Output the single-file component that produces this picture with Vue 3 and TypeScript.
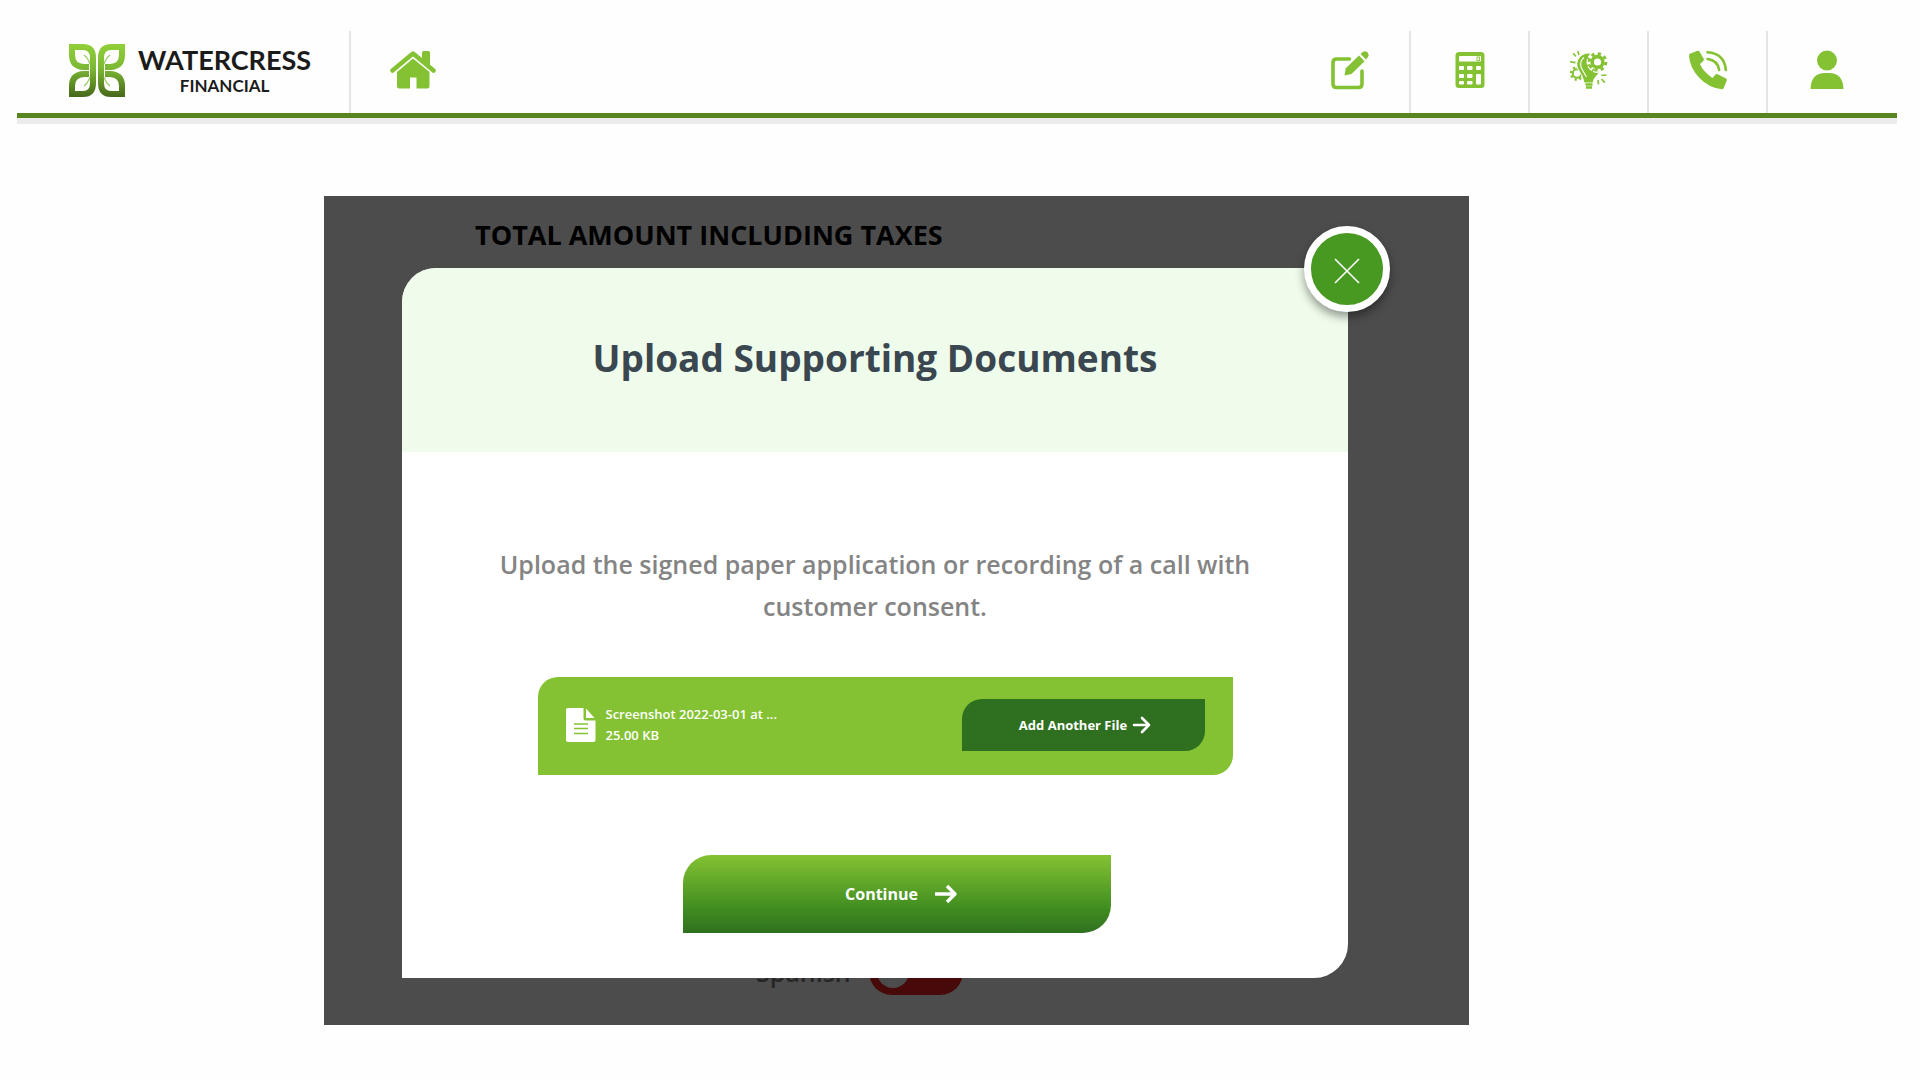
<script setup lang="ts">
import { ref } from 'vue'

interface UploadedFile {
  name: string
  size: string
}

const files = ref<UploadedFile[]>([{ name: 'Screenshot 2022-03-01 at ...', size: '25.00 KB' }])
const spanish = ref(false)
</script>

<template>
  <div class="page">
    <header class="topbar">
      <a class="brand" href="#" aria-label="Watercress Financial">
        <svg class="brand-mark" viewBox="0 0 56 53" fill="none" aria-hidden="true">
          <defs>
            <linearGradient id="leaf" gradientUnits="userSpaceOnUse" x1="0" y1="0" x2="0" y2="53">
              <stop offset="0" stop-color="#91d038" />
              <stop offset="0.45" stop-color="#7cb935" />
              <stop offset="1" stop-color="#47681a" />
            </linearGradient>
          </defs>
          <g stroke="url(#leaf)" stroke-width="6">
            <path d="M20 23H15Q3 22.500 3 11V3H14Q24 3 24 14V39Q24 50 14 50H3V42Q3 30.500 15 30H20" />
            <path d="M36 23H41Q53 22.500 53 11V3H42Q32 3 32 14V39Q32 50 42 50H53V42Q53 30.500 41 30H36" />
          </g>
          <g stroke="#9ccb66" stroke-width="1.200">
            <path d="M15 11Q19 14 21 20M15 42Q19 39 21 33M41 11Q37 14 35 20M41 42Q37 39 35 33" />
          </g>
        </svg>
        <span class="brand-text">
          <span class="brand-name">WATERCRESS</span>
          <span class="brand-sub">FINANCIAL</span>
        </span>
      </a>

      <nav class="nav" aria-label="Main">
        <a class="nav-home" href="#" aria-label="Home">
          <svg class="home-icon" viewBox="0 0 46 40" aria-hidden="true">
            <path d="M32 9V2.500Q32 1 33.500 1H38.500Q40 1 40 2.500V16Z" fill="currentColor" />
            <path d="M2.500 20.500L23 3.500L43.500 20.500" fill="none" stroke="currentColor" stroke-width="4.500" stroke-linejoin="round" stroke-linecap="round" />
            <path d="M7 22L23 8.500L39.500 22V36Q39.500 38.500 37 38.500H26.500V27.500H20V38.500H9.500Q7 38.500 7 36Z" fill="currentColor" />
          </svg>
        </a>
        <div class="nav-tools">
          <a class="tool" href="#" aria-label="Apply">
            <svg viewBox="0 0 40 40" aria-hidden="true">
              <path d="M19.500 9H6.500Q3 9 3 12.500V34Q3 37.500 6.500 37.500H28.500Q32 37.500 32 34V21" fill="none" stroke="currentColor" stroke-width="3.600" stroke-linecap="round" />
              <path d="M14.500 25.500L15.800 18.200L29 5.500L34.500 11.200L21.500 24Z" fill="currentColor" />
              <path d="M30.500 4L33 1.800Q35.500 .3 37.500 2.200Q39.500 4.500 38 7L36 9.500Z" fill="currentColor" />
            </svg>
          </a>
          <a class="tool" href="#" aria-label="Calculator">
            <svg viewBox="0 0 40 40" aria-hidden="true">
              <rect x="5.500" y="2" width="29" height="36" rx="3.500" fill="currentColor" />
              <g fill="#fff">
                <rect x="9" y="6" width="22" height="5.500" rx=".8" />
                <rect x="9" y="16" width="5" height="4" rx="1" />
                <rect x="17" y="16" width="5.500" height="4" rx="1" />
                <rect x="26" y="16" width="5" height="4" rx="1" />
                <rect x="9" y="24" width="5" height="4" rx="1" />
                <rect x="17" y="24" width="5.500" height="4" rx="1" />
                <rect x="9" y="31" width="5" height="3.500" rx="1" />
                <rect x="17" y="31" width="5.500" height="3.500" rx="1" />
                <rect x="26" y="24" width="5" height="10.500" rx="1" />
              </g>
              <rect x="27" y="7" width="2.500" height="3.500" fill="none" stroke="currentColor" stroke-width=".9" />
            </svg>
          </a>
          <a class="tool" href="#" aria-label="Ideas">
            <svg viewBox="0 0 40 40" fill="none" stroke="currentColor" aria-hidden="true">
              <circle cx="8" cy="23.500" r="4.200" stroke-width="2" />
              <circle cx="8" cy="23.500" r="6" stroke-width="2.400" stroke-dasharray="2.200 2.512" />
              <path d="M23 3.500Q16 1.500 10.500 7Q5.500 13 9.500 20Q14 26 15 33H24Q24.500 28 28.500 25Q31 22.500 30 20L20 12Z" fill="currentColor" stroke="#fff" stroke-width="1" />
              <path d="M15 7.500Q10.500 11 12 17Q14 21.500 17.500 27" stroke="#fff" stroke-width="1.100" />
              <circle cx="28.500" cy="12" r="7.800" fill="#fff" stroke="none" />
              <circle cx="28.500" cy="12" r="9.200" stroke="#fff" stroke-width="3.400" stroke-dasharray="5.200 1.367" />
              <circle cx="28.500" cy="12" r="5.400" stroke-width="3.600" />
              <circle cx="28.500" cy="12" r="8.300" stroke-width="3" stroke-dasharray="3.200 3.319" />
              <path d="M16.500 34.500H23.500M17 37.500H23" stroke-width="2.400" />
              <path d="M8.800 1L10 5M4.100 3.300L7 6.500M1 11.700L6.500 12.600M32.500 25.200H37.500M32.500 29L35.800 32.600M29 30L29.500 34.300" stroke-width="1.600" />
            </svg>
          </a>
          <a class="tool" href="#" aria-label="Call">
            <svg viewBox="0 0 40 40" aria-hidden="true">
              <path d="M2 3.800L9.500 .8Q10.800 .3 11.500 1.500L15.800 9Q16.300 10.200 15.300 11L12 14Q15 21.500 24.500 28L27.500 24.600Q28.500 23.600 29.700 24.200L38 28.500Q39.200 29.200 38.800 30.500L35.500 38.500Q35 39.400 34 39.300Q21 38 11.500 28Q1.500 17.500 1 5.500Q1 4.200 2 3.800Z" fill="currentColor" />
              <path d="M19.500 2.300Q36.500 3.500 37.800 20M19.500 9Q30 10.500 31.200 20" fill="none" stroke="currentColor" stroke-width="2.600" stroke-linecap="round" />
            </svg>
          </a>
          <a class="tool" href="#" aria-label="Account">
            <svg viewBox="0 0 40 40" fill="currentColor" aria-hidden="true">
              <circle cx="20" cy="10.500" r="10" />
              <path d="M3.500 39Q4 23 18 23H22Q36 23 36.500 39Z" />
            </svg>
          </a>
        </div>
      </nav>
    </header>

    <main class="stage">
      <section class="backdrop">
        <h2 class="total">TOTAL AMOUNT INCLUDING TAXES</h2>
        <label class="language">
          <span>Spanish</span>
          <input v-model="spanish" class="switch" type="checkbox" role="switch" />
        </label>
      </section>

      <section class="modal" role="dialog" aria-labelledby="modal-title">
        <button class="close" type="button" aria-label="Close">
          <svg viewBox="0 0 26 26" aria-hidden="true">
            <path d="M1 1L25 25M25 1L1 25" stroke="currentColor" stroke-width="1.600" />
          </svg>
        </button>
        <div class="modal-head">
          <h1 id="modal-title">Upload Supporting Documents</h1>
        </div>
        <div class="modal-body">
          <p class="lead">Upload the signed paper application or recording of a call with customer consent.</p>
          <div v-for="file in files" :key="file.name" class="file-row">
            <svg class="file-icon" viewBox="0 0 30 34" aria-hidden="true">
              <path d="M2 0H17.500V10.500Q17.500 12.500 19.500 12.500H29.500V32Q29.500 34 27.500 34H2Q0 34 0 32V2Q0 0 2 0Z" fill="#fff" />
              <path d="M20 .5L28.500 10H20Z" fill="#fff" />
              <path d="M8 16H22M8 20.500H22M8 25.500H22" stroke="#84c233" stroke-width="1.600" />
            </svg>
            <div class="file-info">
              <span>{{ file.name }}</span>
              <span>{{ file.size }}</span>
            </div>
            <button class="add" type="button">
              <span>Add Another File</span>
              <svg class="add-arrow" viewBox="0 0 20 18" aria-hidden="true">
                <path d="M2 9H17M10 2L17 9L10 16" fill="none" stroke="currentColor" stroke-width="2.600" stroke-linecap="round" stroke-linejoin="round" />
              </svg>
            </button>
          </div>
          <button class="continue" type="button">
            <span>Continue</span>
            <svg class="continue-arrow" viewBox="0 0 24 20" aria-hidden="true">
              <path d="M1 10H21M13 2L21 10L13 18" fill="none" stroke="currentColor" stroke-width="3.400" stroke-linejoin="round" />
            </svg>
          </button>
        </div>
      </section>
    </main>
  </div>
</template>

<style>
body {
  margin: 0;
  background: #fefefe;
}
</style>

<style scoped>
.page {
  font-family: "Open Sans", "Noto Sans", sans-serif;
}

.page svg {
  display: block;
}

h1,
h2,
p {
  margin: 0;
}

button {
  border: 0;
  padding: 0;
  font-family: inherit;
  color: #fff;
  cursor: pointer;
}

.topbar {
  display: flex;
  margin: 0 23px 0 17px;
  padding: 31px 12px 0 52px;
  height: 82px;
  border-bottom: 5px solid #578620;
  box-shadow: 0 6px 0 #ececec;
}

.brand {
  display: flex;
  align-items: center;
  gap: 13px;
  width: 280px;
  height: 78px;
  color: #1b1b1b;
  text-decoration: none;
}

.brand-mark {
  width: 56px;
  height: 53px;
}

.brand-text {
  display: flex;
  flex-direction: column;
  align-items: center;
  font-family: Lato, sans-serif;
}

.brand-name {
  font-size: 27px;
  font-weight: 700;
  line-height: 32px;
}

.brand-sub {
  font-size: 17px;
  font-weight: 700;
  line-height: 20px;
}

.nav {
  display: flex;
  flex: 1;
  justify-content: space-between;
  border-left: 2px solid #e4e4e4;
  color: #84c233;
}

.nav-home {
  display: flex;
  align-items: center;
  height: 78px;
  margin-left: 39px;
  color: inherit;
}

.home-icon {
  width: 46px;
  height: 40px;
}

.nav-tools {
  display: flex;
}

.tool {
  box-sizing: border-box;
  display: flex;
  align-items: flex-start;
  justify-content: center;
  width: 119px;
  padding-top: 19px;
  color: inherit;
}

.tool + .tool {
  border-left: 2px solid #e4e4e4;
}

.tool svg {
  width: 40px;
  height: 40px;
}

.stage {
  display: grid;
  margin: 78px 23.490% 55px 16.875%;
  background: #4c4c4c;
}

.backdrop {
  grid-area: 1 / 1;
  display: flex;
  flex-direction: column;
  justify-content: space-between;
  padding: 20px 0 30px 151px;
}

.total {
  font-size: 27px;
  font-weight: 700;
  line-height: 38px;
  color: #000;
}

.language {
  display: flex;
  align-items: center;
  gap: 18px;
  margin-left: 281px;
  font-size: 25px;
  font-weight: 600;
  color: #262626;
}

.switch {
  appearance: none;
  display: flex;
  align-items: center;
  width: 94px;
  height: 46px;
  margin: 0;
  padding: 0 8px;
  border-radius: 23px;
  background: #470909;
}

.switch::before {
  content: "";
  width: 32px;
  height: 32px;
  border-radius: 50%;
  background: #4c4c4c;
}

.modal {
  grid-area: 1 / 1;
  position: relative;
  margin: 72px 121px 47px 78px;
  border-radius: 34px 0 34px 0;
  background: #fff;
}

.close {
  position: absolute;
  top: -42px;
  right: -42px;
  display: flex;
  align-items: center;
  justify-content: center;
  width: 86px;
  height: 86px;
  padding-top: 4px;
  border: 7px solid #fff;
  border-radius: 50%;
  background: #479922;
  box-shadow: 0 5px 10px rgba(0, 0, 0, 0.4);
}

.close svg {
  width: 26px;
  height: 26px;
}

.modal-head {
  padding: 64px 20px 68px;
  border-radius: 34px 0 0 0;
  background: #effceb;
  text-align: center;
}

.modal-head h1 {
  font-size: 37px;
  font-weight: 700;
  line-height: 52px;
  color: #3a4750;
}

.modal-body {
  display: flex;
  flex-direction: column;
  align-items: center;
  padding: 91px 72px 45px;
}

.lead {
  max-width: 780px;
  font-size: 25px;
  font-weight: 600;
  line-height: 42px;
  text-align: center;
  color: #848484;
}

.file-row {
  box-sizing: border-box;
  display: flex;
  align-items: center;
  width: 100%;
  max-width: 695px;
  margin: 50px 0 80px 20px;
  padding: 22px 28px 24px;
  border-radius: 20px 0 20px 0;
  background: #84c233;
}

.file-icon {
  width: 30px;
  height: 34px;
}

.file-info {
  display: flex;
  flex: 1;
  flex-direction: column;
  margin-left: 10px;
  font-size: 13px;
  font-weight: 600;
  line-height: 21px;
  color: #fff;
}

.add {
  display: flex;
  align-items: center;
  justify-content: center;
  gap: 5px;
  width: 243px;
  height: 52px;
  padding-left: 5px;
  border-radius: 20px 0 20px 0;
  background: #2f7020;
  font-size: 13px;
  font-weight: 700;
}

.add-arrow {
  width: 20px;
  height: 18px;
}

.continue {
  display: flex;
  align-items: center;
  justify-content: center;
  gap: 16px;
  width: 428px;
  height: 78px;
  margin-left: 44px;
  padding-left: 9px;
  border-radius: 28px 0 28px 0;
  background: linear-gradient(#84c233, #3f8c20 70%, #2f7020);
  font-size: 16px;
  font-weight: 700;
}

.continue-arrow {
  width: 24px;
  height: 20px;
}
</style>
